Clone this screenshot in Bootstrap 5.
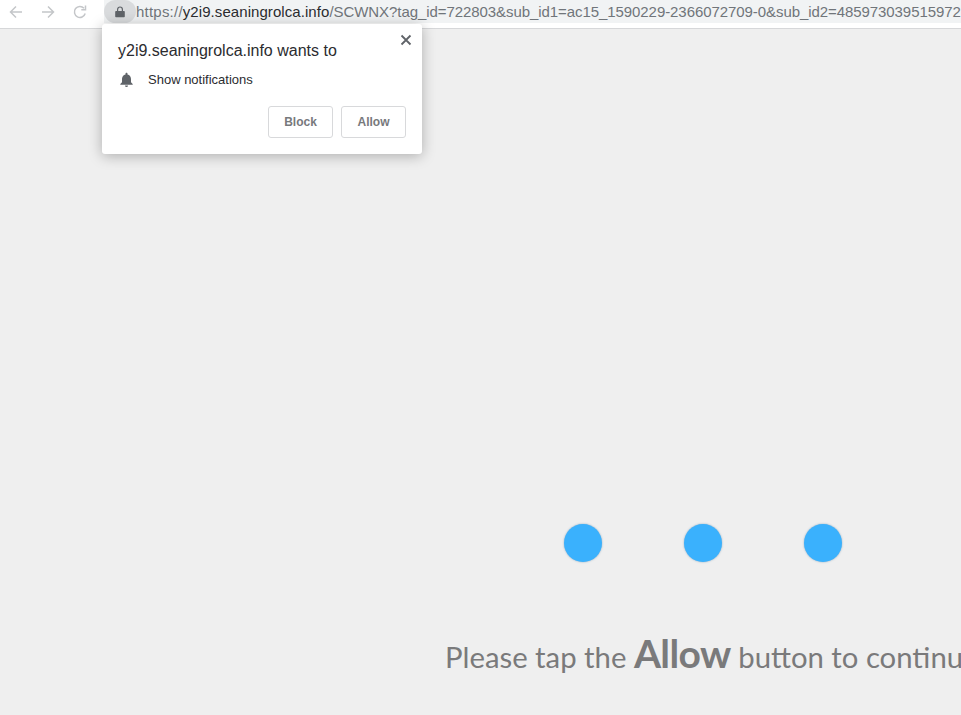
<!DOCTYPE html>
<html lang="en">
<head>
  <meta charset="UTF-8">
  <meta name="viewport" content="width=device-width, initial-scale=1.0">
  <title>Show notifications</title>
  <link href="https://cdn.jsdelivr.net/npm/bootstrap@5.3.2/dist/css/bootstrap.min.css" rel="stylesheet">
  <style>
    html, body { height: 100%; overflow: hidden; }
    body { background: #efefef; font-family: "Liberation Sans", Arial, sans-serif; }
    .page-shell { height: 715px; }
    .browser-bar { height: 29px; background: #fff; border-bottom: 1px solid #d6d7d9; }
    .nav-icons { width: 104px; padding-left: 8px; gap: 16px; height: 23px; }
    .omnibox { height: 23px; background: #f1f3f4; white-space: nowrap; overflow: hidden; }
    .lock-pill { width: 32px; height: 23px; background: #d9dbdd; border-radius: 12px; flex: none; }
    .url-text { font-size: 15px; color: #70757a; line-height: 21px; letter-spacing: -.07px; }
    .url-scheme { letter-spacing: .22px; }
    .url-host { color: #2b2c2f; letter-spacing: .07px; }
    .perm-popup { position: absolute; left: 102px; top: 24px; width: 320px; height: 130px; background: #fff; border-radius: 3px; box-shadow: 0 2px 14px rgba(0,0,0,.28); padding: 18px 16px 16px; }
    .popup-title { font-size: 16px; color: #2b2c2f; line-height: 18px; }
    .popup-close { position: absolute; right: 10px; top: 10px; width: 12px; height: 12px; }
    .popup-row { margin-top: 11px; height: 18px; padding-left: 1px; }
    .popup-row span { font-size: 13px; color: #2b2c2f; margin-left: 14px; }
    .popup-actions { margin-top: 17px; gap: 8px; }
    .perm-btn { width: 65px; height: 32px; padding: 0; font-size: 12px; font-weight: 700; color: #77797c; background: #fff; border: 1px solid #d8d9db; border-radius: 3px; }
    .dots-row { margin-top: 495px; padding-left: 564px; gap: 82px; }
    .blue-dot { width: 38px; height: 38px; border-radius: 50%; background: #3ab1fd; box-shadow: 0 0 2px rgba(70,120,160,.6); flex: none; }
    .tap-msg { margin-top: 69px; padding-left: 445px; white-space: nowrap; font-family: Lato, "Noto Sans", sans-serif; font-size: 29.3px; color: #7a7a7b; line-height: 44px; }
    .tap-msg b { font-size: 39px; font-weight: 700; letter-spacing: -.6px; }
  </style>
</head>
<body>
  <div class="page-shell position-relative overflow-hidden">
    <!-- browser toolbar -->
    <div class="browser-bar d-flex">
      <div class="nav-icons d-flex align-items-center flex-shrink-0">
        <svg width="16" height="16" viewBox="0 0 16 16" fill="none" stroke="#c4c6c9" stroke-width="1.5"><path d="M14 8H2.5M8 2.5 2.5 8 8 13.5"/></svg>
        <svg width="16" height="16" viewBox="0 0 16 16" fill="none" stroke="#c4c6c9" stroke-width="1.5"><path d="M2 8h11.5M8 2.5 13.5 8 8 13.5"/></svg>
        <svg width="16" height="16" viewBox="0 0 16 16" fill="none" stroke="#c4c6c9" stroke-width="1.5"><path d="M13.2 9.5A5.5 5.500 0 1 1 12 4.200"/><path d="M13.500 1.500v4.200H9.300"/></svg>
      </div>
      <div class="omnibox d-flex align-items-center flex-grow-1">
        <div class="lock-pill d-flex align-items-center justify-content-center">
          <svg width="10" height="12" viewBox="0 0 10 12"><path fill="#5f6368" d="M1 5h8a.8.8 0 0 1 .8.8v4.600a.8.8 0 0 1-.8.8H1a.8.8 0 0 1-.8-.8V5.800A.8.8 0 0 1 1 5z"/><path fill="none" stroke="#5f6368" stroke-width="1.200" d="M2.600 5V3.400a2.400 2.400 0 0 1 4.800 0V5"/></svg>
        </div>
        <span class="url-text"><span class="url-scheme">https://</span><span class="url-host">y2i9.seaningrolca.info</span>/SCWNX?tag_id=722803&amp;sub_id1=ac15_1590229-2366072709-0&amp;sub_id2=485973039515972</span>
      </div>
    </div>

    <!-- permission popup -->
    <div class="perm-popup">
      <svg class="popup-close" viewBox="0 0 12 12" stroke="#5f6368" stroke-width="1.800"><path d="M1.500 1.500l9 9M10.500 1.500l-9 9"/></svg>
      <div class="popup-title">y2i9.seaningrolca.info wants to</div>
      <div class="popup-row d-flex align-items-center">
        <svg width="15" height="16" viewBox="0 0 15 16"><path fill="#5f6368" d="M7.500 .8c.6 0 1 .4 1 1v.7c2.100.5 3.500 2.300 3.500 4.500v3.300l1.700 1.700v.8H1.300V12l1.700-1.700V7c0-2.200 1.400-4 3.500-4.500v-.7c0-.6.400-1 1-1zM6 13.600h3a1.500 1.500 0 0 1-3 0z"/></svg>
        <span>Show notifications</span>
      </div>
      <div class="popup-actions d-flex justify-content-end">
        <button type="button" class="btn perm-btn">Block</button>
        <button type="button" class="btn perm-btn">Allow</button>
      </div>
    </div>

    <!-- page content -->
    <div class="dots-row d-flex">
      <div class="blue-dot"></div>
      <div class="blue-dot"></div>
      <div class="blue-dot"></div>
    </div>
    <div class="tap-msg">Please tap the <b>Allow</b> button to continue</div>
  </div>
  <script src="https://cdn.jsdelivr.net/npm/bootstrap@5.3.2/dist/js/bootstrap.bundle.min.js"></script>
</body>
</html>
